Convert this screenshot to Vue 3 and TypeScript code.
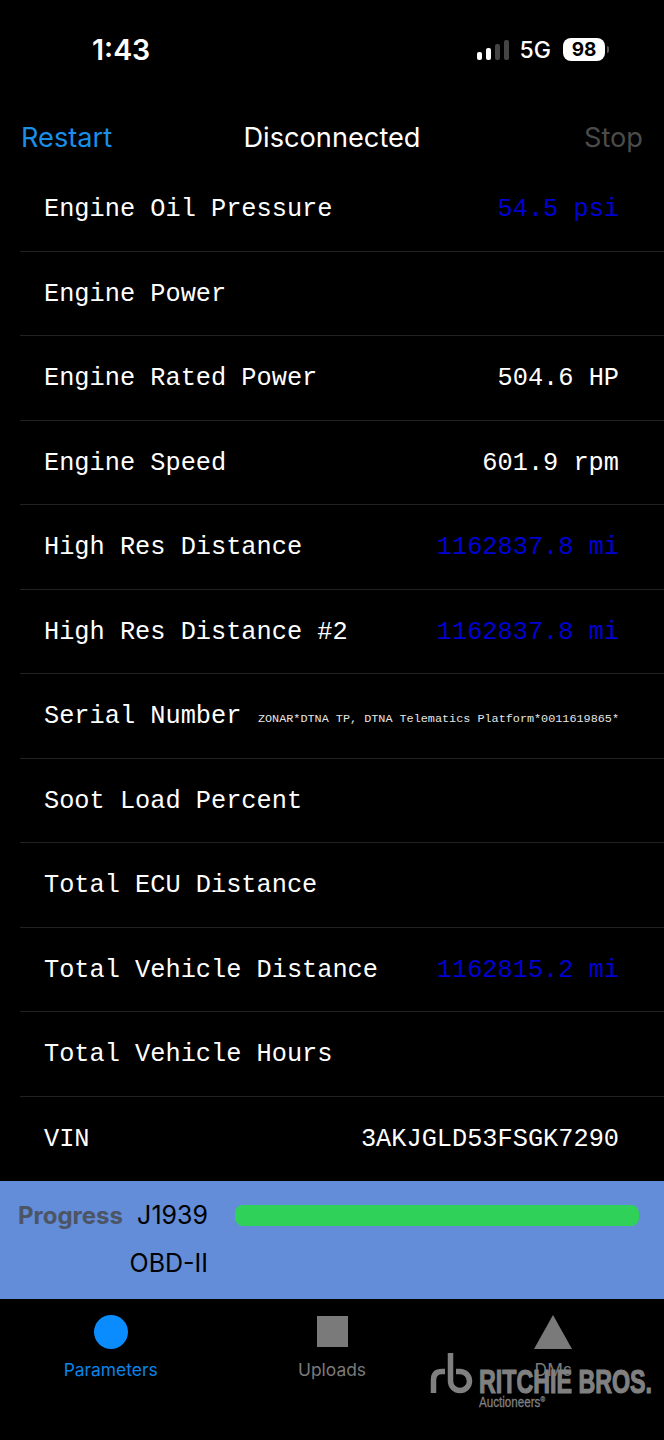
<script setup lang="ts">
interface Row {
  label: string
  value?: string
  tone?: 'blue' | 'small'
}
const rows: Row[] = [
  { label: 'Engine Oil Pressure', value: '54.5 psi', tone: 'blue' },
  { label: 'Engine Power' },
  { label: 'Engine Rated Power', value: '504.6 HP' },
  { label: 'Engine Speed', value: '601.9 rpm' },
  { label: 'High Res Distance', value: '1162837.8 mi', tone: 'blue' },
  { label: 'High Res Distance #2', value: '1162837.8 mi', tone: 'blue' },
  { label: 'Serial Number', value: 'ZONAR*DTNA TP, DTNA Telematics Platform*0011619865*', tone: 'small' },
  { label: 'Soot Load Percent' },
  { label: 'Total ECU Distance' },
  { label: 'Total Vehicle Distance', value: '1162815.2 mi', tone: 'blue' },
  { label: 'Total Vehicle Hours' },
  { label: 'VIN', value: '3AKJGLD53FSGK7290' },
]
</script>

<template>
  <div class="screen">
    <header class="status">
      <span class="time">1:43</span>
      <div class="status-right">
        <div class="signal">
          <i class="b1"></i><i class="b2"></i><i class="b3"></i><i class="b4"></i>
        </div>
        <span class="net">5G</span>
        <div class="battery"><span>98</span></div>
        <i class="nub"></i>
      </div>
    </header>

    <nav class="nav">
      <span class="restart">Restart</span>
      <span class="title">Disconnected</span>
      <span class="stop">Stop</span>
    </nav>

    <section class="list">
      <div v-for="row in rows" :key="row.label" class="row">
        <span class="label">{{ row.label }}</span>
        <span v-if="row.value" class="value" :class="row.tone">{{ row.value }}</span>
      </div>
    </section>

    <section class="progress">
      <div class="p-line">
        <span class="p-title">Progress</span>
        <span class="p-name">J1939</span>
        <div class="p-bar"></div>
      </div>
      <div class="p-line">
        <span class="p-title"></span>
        <span class="p-name">OBD-II</span>
      </div>
    </section>

    <footer class="tabs">
      <div class="tab active">
        <svg width="34" height="34" viewBox="0 0 34 34"><circle cx="17" cy="17" r="17" fill="#0a8cff" /></svg>
        <span>Parameters</span>
      </div>
      <div class="tab">
        <svg width="34" height="34" viewBox="0 0 34 34"><rect x="2" y="1" width="31" height="31" fill="#7a7a7a" /></svg>
        <span>Uploads</span>
      </div>
      <div class="tab">
        <svg width="38" height="34" viewBox="0 0 38 34"><path d="M19 0 L38 34 H0 Z" fill="#7a7a7a" /></svg>
        <span>DMs</span>
      </div>
      <svg class="logo" width="230" height="62" viewBox="0 0 230 62">
        <path d="M7.500 43 V30 Q7.500 21.500 16 21.500 H19" fill="none" stroke="#808080" stroke-width="5.500" />
        <path d="M24.500 3 V31 a9.500 9.500 0 1 0 9.500 -9.500 H30" fill="none" stroke="#808080" stroke-width="5.500" />
        <text x="53" y="43" class="logo-name" textLength="173" lengthAdjust="spacingAndGlyphs">RITCHIE BROS.</text>
        <text x="53" y="57" class="logo-sub" textLength="66" lengthAdjust="spacingAndGlyphs">Auctioneers<tspan font-size="8" dy="-5">®</tspan></text>
      </svg>
    </footer>
  </div>
</template>

<style scoped>
.screen {
  width: 664px;
  height: 1440px;
  background: #000;
  color: #fff;
  display: flex;
  flex-direction: column;
  overflow: hidden;
  font-family: Inter, "Liberation Sans", sans-serif;
}
.status {
  height: 100px;
  flex: none;
  box-sizing: border-box;
  padding: 0 55px 0 92px;
  display: flex;
  justify-content: space-between;
  align-items: flex-start;
}
.time {
  margin-top: 32px;
  font-size: 28.5px;
  line-height: 36px;
  font-weight: 600;
}
.status-right {
  margin-top: 38px;
  display: flex;
  align-items: center;
  height: 23px;
}
.signal {
  display: flex;
  align-items: flex-end;
  gap: 4px;
  height: 20px;
}
.signal i {
  width: 5px;
  border-radius: 2px;
  background: #fff;
}
.signal .b1 { height: 8px; }
.signal .b2 { height: 12px; }
.signal .b3 { height: 16px; background: #444; }
.signal .b4 { height: 20px; background: #444; }
.net {
  margin-left: 11px;
  font-size: 23px;
  font-weight: 500;
}
.battery {
  margin-left: 12px;
  width: 42px;
  height: 23px;
  border-radius: 8px;
  background: #fff;
  color: #000;
  display: flex;
  align-items: center;
  justify-content: center;
  font-size: 19px;
  font-weight: 700;
}
.nub {
  width: 2px;
  height: 7px;
  margin-left: 2px;
  border-radius: 0 2px 2px 0;
  background: #555;
}
.nav {
  height: 67px;
  flex: none;
  box-sizing: border-box;
  padding: 8px 21px 0 21px;
  display: grid;
  grid-template-columns: 1fr auto 1fr;
  align-items: center;
  font-size: 27.2px;
}
.stop {
  justify-self: end;
  color: #4b4b4b;
}
.restart { color: #1a8fe8; }
.list { flex: none; }
.row {
  height: 84.5px;
  box-sizing: border-box;
  margin-left: 20px;
  padding: 2px 45px 0 24px;
  border-bottom: 1px solid #222;
  display: flex;
  align-items: center;
  justify-content: space-between;
  font-family: "Liberation Mono", monospace;
  font-size: 25.3px;
  white-space: nowrap;
}
.row:last-child { border-bottom: none; }
.value.blue { color: #0000d2; }
.value.small {
  font-size: 11.8px;
  color: #e6e6e6;
  margin-top: 5px;
}
.progress {
  height: 117.5px;
  flex: none;
  box-sizing: border-box;
  background: #638cd9;
  padding: 10px 25px 0 18px;
  display: flex;
  flex-direction: column;
}
.p-line {
  display: flex;
  align-items: center;
  height: 48px;
}
.p-title {
  width: 100px;
  flex: none;
  font-size: 24px;
  font-weight: 700;
  color: #4c5563;
}
.p-name {
  width: 90px;
  flex: none;
  text-align: right;
  font-size: 25px;
  color: #000;
}
.p-bar {
  flex: 1;
  height: 21px;
  margin-left: 27px;
  border-radius: 8px;
  background: #30d158;
}
.tabs {
  flex: 1;
  position: relative;
  display: grid;
  grid-template-columns: repeat(3, 1fr);
  padding-top: 16px;
  background: #000;
}
.tab {
  display: flex;
  flex-direction: column;
  align-items: center;
  gap: 11px;
  font-size: 17.4px;
  line-height: 20px;
  color: #7a7a7a;
}
.tab.active { color: #0a84e8; }
.logo {
  position: absolute;
  left: 426px;
  top: 51px;
}
.logo-name {
  font-family: "Liberation Sans", sans-serif;
  font-weight: 700;
  font-size: 33px;
  fill: #808080;
  stroke: #808080;
  stroke-width: 1.2px;
}
.logo-sub {
  font-family: "Liberation Sans", sans-serif;
  font-size: 15px;
  fill: #808080;
  stroke: #808080;
  stroke-width: 0.3px;
}
</style>
